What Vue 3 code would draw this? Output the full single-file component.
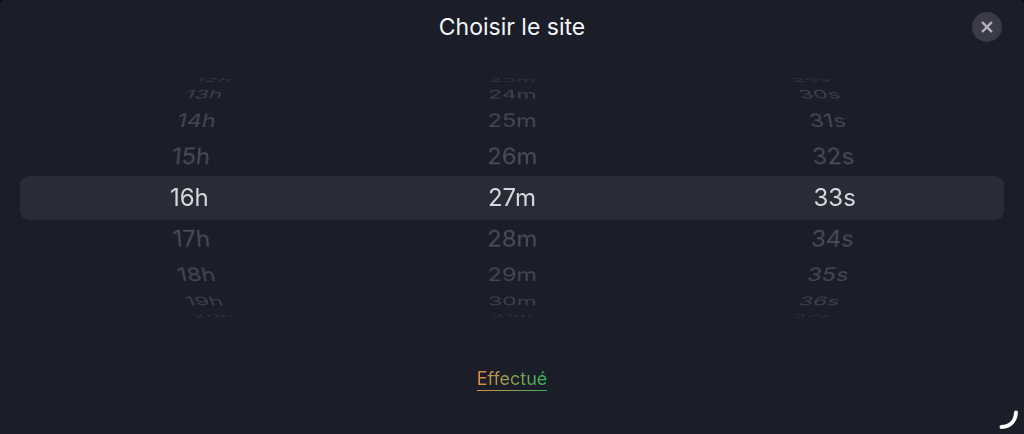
<script setup>
import { ref, computed } from "vue";

const hour = ref(16);
const minute = ref(27);
const second = ref(33);

const STEP = 18; // degrees between two rows of the wheel
const REACH = 4; // rows visible on each side of the selection

/** Rows drawn around the selected value, wrapping at `size` */
function buildRows(value, size) {
  const rows = [];
  for (let i = -REACH; i <= REACH; i++) {
    rows.push({ offset: i, distance: Math.abs(i), value: (value + i + size) % size });
  }
  return rows;
}

const columns = computed(() => [
  { key: "h", label: "Heures", model: hour, rows: buildRows(hour.value, 24) },
  { key: "m", label: "Minutes", model: minute, rows: buildRows(minute.value, 60) },
  { key: "s", label: "Secondes", model: second, rows: buildRows(second.value, 60) },
]);

function pick(column, value) {
  column.model.value = value;
}
</script>

<template>
  <main class="sheet">
    <header class="header">
      <h1>Choisir le site</h1>
      <button class="close" type="button" aria-label="Fermer">
        <svg viewBox="0 0 30 30" aria-hidden="true">
          <path d="M10.7 10.7 19.3 19.3M19.3 10.7 10.7 19.3" />
        </svg>
      </button>
    </header>

    <section class="picker">
      <div class="wheels">
        <div
          v-for="column in columns"
          :key="column.key"
          class="wheel"
          role="group"
          :aria-label="column.label"
        >
          <button
            v-for="row in column.rows"
            :key="row.offset"
            type="button"
            class="row"
            :class="'far-' + row.distance"
            :style="{ '--angle': -row.offset * STEP + 'deg' }"
            @click="pick(column, row.value)"
          >{{ row.value }}{{ column.key }}</button>
        </div>
      </div>
    </section>

    <footer class="footer">
      <button class="done" type="button">Effectué</button>
    </footer>

    <svg class="grip" viewBox="0 0 24 24" aria-hidden="true">
      <path d="M19 4.5C18.5 13 13 18.5 4.5 19" />
    </svg>
  </main>
</template>

<style>
body {
  background: #0c0d14;
}
</style>

<style scoped>
.sheet {
  position: relative;
  box-sizing: border-box;
  min-height: 100vh;
  padding: 0 20px 40px;
  border-radius: 5px 5px 0 0;
  background: #1b1d29;
  font-family: Inter, "Liberation Sans", sans-serif;
}

button {
  margin: 0;
  padding: 0;
  border: 0;
  background: none;
  font-family: inherit;
  cursor: pointer;
}

.header {
  display: grid;
  grid-template-columns: 1fr auto 1fr;
  align-items: center;
  height: 54px;
}
h1 {
  grid-column: 2;
  margin: 0;
  color: #f4f5f7;
  font-size: 23px;
  font-weight: 400;
  line-height: 30px;
}
.close {
  justify-self: end;
  width: 30px;
  height: 30px;
  margin-right: 2px;
  border-radius: 50%;
  background: #3a3b47;
}
.close svg {
  display: block;
}
.close path {
  fill: none;
  stroke: #b0b1b9;
  stroke-width: 2.4;
  stroke-linecap: round;
}

.picker {
  display: flex;
  align-items: center;
  height: 288px;
}
.wheels {
  display: flex;
  flex: 1;
  height: 44px;
  padding: 0 8px;
  border-radius: 9px;
  background: #292b36;
  perspective: 1150px;
}

/* each column is a cylinder, rows are laid on its surface */
.wheel {
  display: grid;
  flex: 1;
  justify-items: center;
  align-items: center;
  transform: translateZ(-134px);
  transform-style: preserve-3d;
}
.row {
  grid-area: 1 / 1;
  color: #4a4b57;
  font-size: 24px;
  line-height: 40px;
  transform: rotateX(var(--angle)) translateZ(134px);
}
.far-0 { color: #d6d7dc; }
.far-2 { color: #464753; }
.far-3 { color: #3e404b; }
.far-4 { color: #2e303b; }

.footer {
  display: flex;
  justify-content: center;
  padding-top: 25px;
}
.done {
  padding-bottom: 1px;
  background:
    linear-gradient(90deg, #e58a45, #35b558) bottom / 100% 1px no-repeat,
    linear-gradient(90deg, #e58a45, #35b558) text;
  color: transparent;
  font-size: 18px;
  line-height: 23px;
}

.grip {
  position: absolute;
  right: 3px;
  bottom: 2px;
  width: 24px;
  height: 24px;
}
.grip path {
  fill: none;
  stroke: #fff;
  stroke-width: 4;
  stroke-linecap: round;
}
</style>
